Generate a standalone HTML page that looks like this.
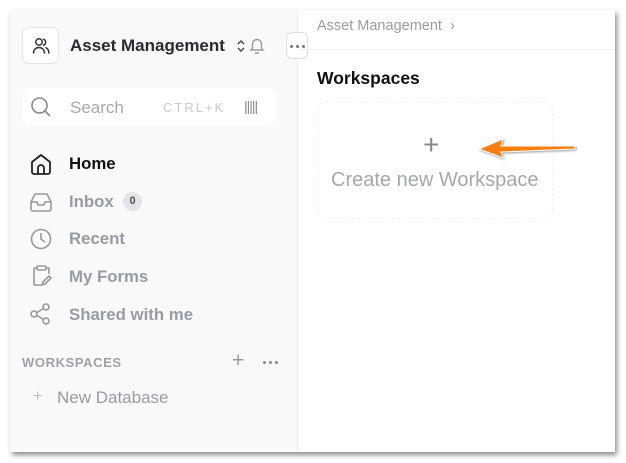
<!DOCTYPE html>
<html><head><meta charset="utf-8"><style>
*{margin:0;padding:0;box-sizing:border-box}
body{width:626px;height:463px;background:#fff;position:relative;overflow:hidden;font-family:"Liberation Sans",sans-serif}
.win{position:absolute;left:10px;top:10px;width:605px;height:442px;background:#fff;box-shadow:2px 3px 5px rgba(0,0,0,.45);overflow:hidden}
.side{position:absolute;left:0;top:0;width:288px;height:442px;background:#f9f9f9;border-right:1px solid #eee}
.abs{position:absolute}
.t{position:absolute;white-space:nowrap}
.nav{font-size:16.8px;font-weight:bold;color:#9a9aa6}
.dots{position:absolute;display:flex;gap:3px}
.dots i{width:3px;height:3px;border-radius:2px;background:#777;display:block}
svg{position:absolute;overflow:visible}
</style></head><body>
<div class="win">
 <div class="side">
  <div class="abs" style="left:12px;top:17px;width:37px;height:37px;border:1px solid #e4e4e4;border-radius:7px;background:#fff"></div>
  <svg style="left:21px;top:26px" width="20" height="20" viewBox="0 0 20 20" fill="none" stroke="#333" stroke-width="1.5" stroke-linecap="round"><circle cx="8" cy="6" r="3.2"/><path d="M2.5 17c0-3.3 2.5-5.5 5.5-5.5s5.5 2.2 5.5 5.5"/><path d="M12.5 3.2a3.2 3.2 0 0 1 0 6M15 11.8c1.7.6 2.8 2.7 2.8 5.2"/></svg>
  <div class="t" style="left:60px;top:26px;font-size:17px;font-weight:bold;color:#2a2a33">Asset Management</div>
  <svg style="left:226px;top:29px" width="10" height="14" viewBox="0 0 10 14" fill="none" stroke="#444" stroke-width="1.4"><path d="M2 5l3-3 3 3M2 9l3 3 3-3"/></svg>
  <svg style="left:238px;top:26px" width="18" height="20" viewBox="0 0 18 20" fill="none" stroke="#999" stroke-width="1.4"><path d="M3 14h12l-1.5-2V8a4.5 4.5 0 0 0-9 0v4z M7 17h4"/></svg>
  <div class="abs" style="left:276px;top:22px;width:22px;height:27px;border:1px solid #ddd;border-radius:6px;background:#fff"></div>
  <div class="dots" style="left:280px;top:35px"><i></i><i></i><i></i></div>
  <div class="abs" style="left:12px;top:78px;width:255px;height:37px;background:#fff;border-radius:9px"></div>
  <svg style="left:20px;top:86px" width="22" height="22" viewBox="0 0 22 22" fill="none" stroke="#888" stroke-width="1.6"><circle cx="9.5" cy="9.5" r="7.5"/><path d="M15 15l5 5"/></svg>
  <div class="t" style="left:60px;top:88px;font-size:17px;color:#a8a8b2">Search</div>
  <div class="t" style="left:153px;top:90px;font-size:13px;color:#c8c8d0;letter-spacing:2px">CTRL+K</div>
  <div class="t" style="left:234px;top:88px;font-size:14px;color:#888;letter-spacing:-1px">|||||</div>
  <svg style="left:20px;top:143px" width="22" height="22" viewBox="0 0 22 22" fill="none" stroke="#222" stroke-width="1.8" stroke-linejoin="round"><path d="M2 9l9-7 9 7v10a2 2 0 0 1-2 2H4a2 2 0 0 1-2-2z"/><path d="M8 21v-6a3 3 0 0 1 6 0v6"/></svg>
  <div class="t nav" style="left:59px;top:144px;color:#111">Home</div>
  <svg style="left:20px;top:182px" width="22" height="20" viewBox="0 0 22 20" fill="none" stroke="#999" stroke-width="1.6" stroke-linejoin="round"><path d="M1 10l4-8h12l4 8v7a2 2 0 0 1-2 2H3a2 2 0 0 1-2-2z"/><path d="M1 10h6l1 3h6l1-3h6"/></svg>
  <div class="t nav" style="left:59px;top:182px">Inbox</div>
  <div class="abs" style="left:113px;top:182px;width:19px;height:19px;border-radius:10px;background:#e4e4e8;font-size:11px;font-weight:bold;color:#555;text-align:center;line-height:19px">0</div>
  <svg style="left:20px;top:218px" width="22" height="22" viewBox="0 0 22 22" fill="none" stroke="#999" stroke-width="1.6"><circle cx="11" cy="11" r="9.5"/><path d="M11 5v6l4 3"/></svg>
  <div class="t nav" style="left:59px;top:219px">Recent</div>
  <svg style="left:22px;top:255px" width="20" height="22" viewBox="0 0 20 22" fill="none" stroke="#999" stroke-width="1.6" stroke-linejoin="round"><path d="M5 3H2v17h8M14 3h3v6"/><rect x="5" y="1" width="9" height="4" rx="1"/><path d="M17 11l-6 6-1 3 3-1 6-6z"/></svg>
  <div class="t nav" style="left:59px;top:257px">My Forms</div>
  <svg style="left:20px;top:293px" width="22" height="22" viewBox="0 0 22 22" fill="none" stroke="#999" stroke-width="1.6"><circle cx="16" cy="4" r="3"/><circle cx="16" cy="18" r="3"/><circle cx="4" cy="11" r="3"/><path d="M7 9.5l6.5-4M7 12.5l6.5 4"/></svg>
  <div class="t nav" style="left:59px;top:295px">Shared with me</div>
  <div class="t" style="left:12px;top:345px;font-size:13px;font-weight:bold;color:#a0a0aa;letter-spacing:.6px">WORKSPACES</div>
  <div class="t" style="left:222px;top:339px;font-size:21px;color:#999">+</div>
  <div class="dots" style="left:253px;top:351px"><i style="background:#888"></i><i style="background:#888"></i><i style="background:#888"></i></div>
  <div class="t" style="left:23px;top:378px;font-size:16px;color:#bbb">+</div>
  <div class="t" style="left:47px;top:378px;font-size:17px;color:#9a9aa6">New Database</div>
 </div>
 <div class="t" style="left:307px;top:8px;font-size:14.5px;color:#9a9aa6">Asset Management&nbsp; ›</div>
 <div class="abs" style="left:289px;top:39px;width:316px;height:1px;background:#eee"></div>
 <div class="t" style="left:307px;top:58px;font-size:17.5px;font-weight:bold;color:#111">Workspaces</div>
 <div class="abs" style="left:307px;top:92px;width:236px;height:117px;border:1px dashed #f2f2f2;border-radius:8px"></div>
 <div class="t" style="left:413px;top:119px;font-size:28px;font-weight:300;color:#888">+</div>
 <div class="t" style="left:321px;top:159px;font-size:20px;color:#a6a6b0">Create new Workspace</div>
</div>
<svg style="left:0;top:0" width="626" height="463"><path d="M479 149L503 139L501 146L575 146L575 149L501 152L503 158Z" fill="#f77f0e" stroke="#fff" stroke-width="1" style="filter:drop-shadow(1px 1px 1px rgba(0,0,0,.4))"/></svg>
</body></html>
